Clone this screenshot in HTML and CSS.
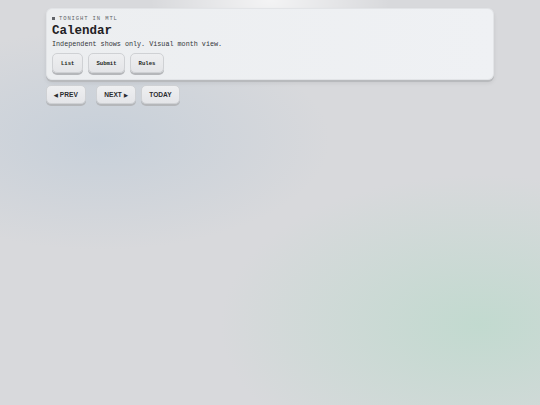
FILE: index.html
```html
<!DOCTYPE html>
<html lang="en">
<head>
  <meta charset="UTF-8"/>
  <meta name="viewport" content="width=device-width,initial-scale=1"/>
  <title>Calendar</title>
  <link rel="stylesheet" href="styles.css">
</head>
<body>
  <main class="wrap">
    <!-- Header card -->
    <header class="card">
      <p class="eyebrow"><span class="dot"></span>TONIGHT IN MTL</p>
      <h1 class="title">Calendar</h1>
      <p class="sub">Independent shows only. Visual month view.</p>
      <nav class="tabs">
        <button class="btn wide">List</button>
        <button class="btn">Submit</button>
        <button class="btn wide">Rules</button>
      </nav>
    </header>

    <!-- Month controls -->
    <div class="controls">
      <button class="btn nav"><span class="tri">&#9664;</span> PREV</button>
      <button class="btn nav next">NEXT <span class="tri">&#9654;</span></button>
      <button class="btn nav">TODAY</button>
    </div>
  </main>
</body>
</html>
```

FILE: styles.css
```css
/* BASE */
* { box-sizing: border-box; margin: 0; padding: 0; }
html, body { height: 100%; }
body {
  font-family: "Liberation Mono", monospace;
  color: #1f2124;
  background:
    radial-gradient(ellipse 120px 70px at 270px 0px, rgba(255,255,255,.7), rgba(255,255,255,0)),
    radial-gradient(ellipse 230px 110px at 100px 140px, rgba(185,200,215,.55), rgba(185,200,215,0)),
    radial-gradient(ellipse 260px 150px at 480px 325px, rgba(190,218,205,.85), rgba(190,218,205,0)),
    #d8d9dc;
}

/* LAYOUT */
.wrap { width: 448px; margin: 0 auto; padding-top: 8px; }

/* HEADER CARD */
.card {
  background: linear-gradient(90deg, #eceef0, #eff1f4);
  border: 1px solid #e2e4e7;
  border-radius: 6px;
  box-shadow: 0 2px 0 #b8babd, 0 3px 4px rgba(0,0,0,.08);
  padding: 5px 5px 6px;
}
.eyebrow { font-size: 5.5px; line-height: 9px; letter-spacing: .9px; color: #606368; display: flex; align-items: center; }
.dot { width: 3px; height: 3px; background: #606368; margin-right: 4px; }
.title { font-size: 12.5px; font-weight: bold; line-height: 15px; margin-top: 1px; }
.sub { font-size: 6.75px; line-height: 10px; color: #333539; }
.tabs { display: flex; gap: 5px; margin-top: 4px; }

/* BUTTONS */
.btn {
  font-family: "Liberation Mono", monospace;
  font-size: 5.6px;
  font-weight: bold;
  color: #1c1e21;
  height: 20px;
  padding: 0 7px;
  background: linear-gradient(#eeeff1, #e4e5e8);
  border: 1px solid #cfd1d4;
  border-radius: 5px;
  box-shadow: 0 2px 0 #b5b7ba;
  cursor: pointer;
}
.tabs .wide { padding: 0 8px; }

/* MONTH CONTROLS */
.controls { display: flex; gap: 5px; margin-top: 5px; }
.nav { font-family: "Liberation Sans", Arial, sans-serif; font-size: 6.6px; height: 19px; padding: 0 7px; color: #2a2c2f; }
.tri { font-size: 5px; }
.next { margin-left: 5px; padding: 0 7.5px; }
```
